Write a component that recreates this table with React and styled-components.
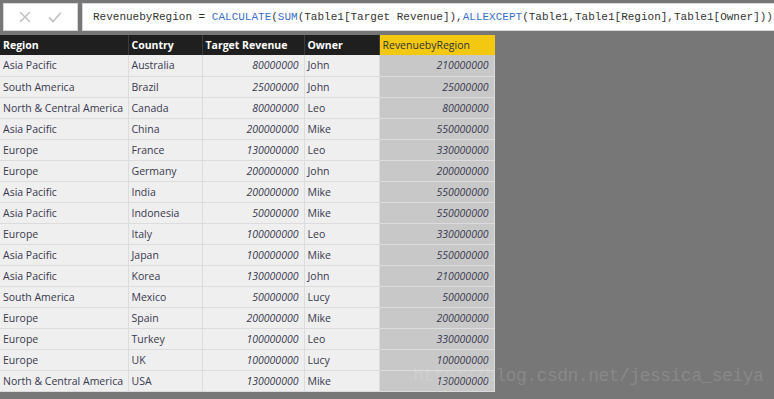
import React from 'react'
import styled, { createGlobalStyle } from 'styled-components'

const GlobalStyle = createGlobalStyle`
  html, body {
    margin: 0;
    padding: 0;
    background: #777777;
  }
`

const Page = styled.div`
  position: relative;
  width: 774px;
  height: 399px;
  overflow: hidden;
  background: #777777;
  font-family: 'Open Sans', 'Noto Sans', sans-serif;
`

const FormulaBar = styled.div`
  display: flex;
  gap: 4px;
  padding: 3px 0 0 3px;
  height: 28px;
`

const ActionBox = styled.div`
  width: 75px;
  box-sizing: border-box;
  border: 1px solid #d6d6d6;
  background: #ffffff;
  display: flex;
  align-items: center;
  justify-content: space-around;
  padding: 0 6px;
`

const FormulaBox = styled.div`
  flex: 1;
  background: #ffffff;
  border: 1px solid #d6d6d6;
  border-right: none;
  display: flex;
  align-items: center;
  padding-left: 10px;
  font-family: 'Liberation Mono', 'DejaVu Sans Mono', monospace;
  font-size: 11px;
  color: #333333;
  white-space: pre;
`

const Fn = styled.span`
  color: #3a6fc8;
`

const Table = styled.table`
  margin-top: 4px;
  border-collapse: collapse;
  table-layout: fixed;
  font-size: 10.5px;
`

const Head = styled.th`
  box-sizing: border-box;
  width: ${p => p.$w}px;
  height: 20px;
  padding: 0 3px;
  text-align: left;
  font-weight: ${p => (p.$measure ? 400 : 700)};
  color: ${p => (p.$measure ? '#333333' : '#ffffff')};
  background: ${p => (p.$measure ? '#f2c811' : '#1f1f1f')};
  border-right: 1px solid ${p => (p.$measure ? '#f2c811' : '#3c3c3c')};
  white-space: nowrap;
  overflow: hidden;
`

const Cell = styled.td`
  box-sizing: border-box;
  height: 21px;
  padding: 0 ${p => (p.$num ? '5px' : '3px')} 0 3px;
  color: #38384e;
  background: ${p => (p.$measure ? '#c8c8c8' : '#efefef')};
  border-bottom: 1px solid #dcdcdc;
  border-right: 1px solid #dcdcdc;
  text-align: ${p => (p.$num ? 'right' : 'left')};
  font-style: ${p => (p.$num ? 'italic' : 'normal')};
  white-space: nowrap;
  overflow: hidden;
`

const Watermark = styled.div`
  position: absolute;
  left: 413px;
  top: 366px;
  font-family: 'Liberation Mono', monospace;
  font-size: 18px;
  letter-spacing: -0.5px;
  color: rgba(255, 255, 255, 0.15);
  white-space: nowrap;
  pointer-events: none;
`

const rows = [
  ['Asia Pacific', 'Australia', '80000000', 'John', '210000000'],
  ['South America', 'Brazil', '25000000', 'John', '25000000'],
  ['North & Central America', 'Canada', '80000000', 'Leo', '80000000'],
  ['Asia Pacific', 'China', '200000000', 'Mike', '550000000'],
  ['Europe', 'France', '130000000', 'Leo', '330000000'],
  ['Europe', 'Germany', '200000000', 'John', '200000000'],
  ['Asia Pacific', 'India', '200000000', 'Mike', '550000000'],
  ['Asia Pacific', 'Indonesia', '50000000', 'Mike', '550000000'],
  ['Europe', 'Italy', '100000000', 'Leo', '330000000'],
  ['Asia Pacific', 'Japan', '100000000', 'Mike', '550000000'],
  ['Asia Pacific', 'Korea', '130000000', 'John', '210000000'],
  ['South America', 'Mexico', '50000000', 'Lucy', '50000000'],
  ['Europe', 'Spain', '200000000', 'Mike', '200000000'],
  ['Europe', 'Turkey', '100000000', 'Leo', '330000000'],
  ['Europe', 'UK', '100000000', 'Lucy', '100000000'],
  ['North & Central America', 'USA', '130000000', 'Mike', '130000000']
]

const CrossIcon = () => (
  <svg width="12" height="12" viewBox="0 0 12 12">
    <path d="M1 1 L11 11 M11 1 L1 11" stroke="#c4c4c4" strokeWidth="1.6" fill="none" />
  </svg>
)

const CheckIcon = () => (
  <svg width="14" height="12" viewBox="0 0 14 12">
    <path d="M1 6.5 L5 10.5 L13 1.5" stroke="#c4c4c4" strokeWidth="1.8" fill="none" />
  </svg>
)

export default function App() {
  return (
    <Page>
      <GlobalStyle />
      <FormulaBar>
        <ActionBox>
          <CrossIcon />
          <CheckIcon />
        </ActionBox>
        <FormulaBox>
          {'RevenuebyRegion = '}
          <Fn>CALCULATE</Fn>(<Fn>SUM</Fn>(Table1[Target Revenue]),<Fn>ALLEXCEPT</Fn>
          (Table1,Table1[Region],Table1[Owner]))
        </FormulaBox>
      </FormulaBar>
      <Table>
        <thead>
          <tr>
            <Head $w={128}>Region</Head>
            <Head $w={74}>Country</Head>
            <Head $w={102}>Target Revenue</Head>
            <Head $w={75}>Owner</Head>
            <Head $w={115} $measure>RevenuebyRegion</Head>
          </tr>
        </thead>
        <tbody>
          {rows.map((r, i) => (
            <tr key={i}>
              <Cell>{r[0]}</Cell>
              <Cell>{r[1]}</Cell>
              <Cell $num>{r[2]}</Cell>
              <Cell>{r[3]}</Cell>
              <Cell $num $measure>{r[4]}</Cell>
            </tr>
          ))}
        </tbody>
      </Table>
      <Watermark>http://blog.csdn.net/jessica_seiya</Watermark>
    </Page>
  )
}
